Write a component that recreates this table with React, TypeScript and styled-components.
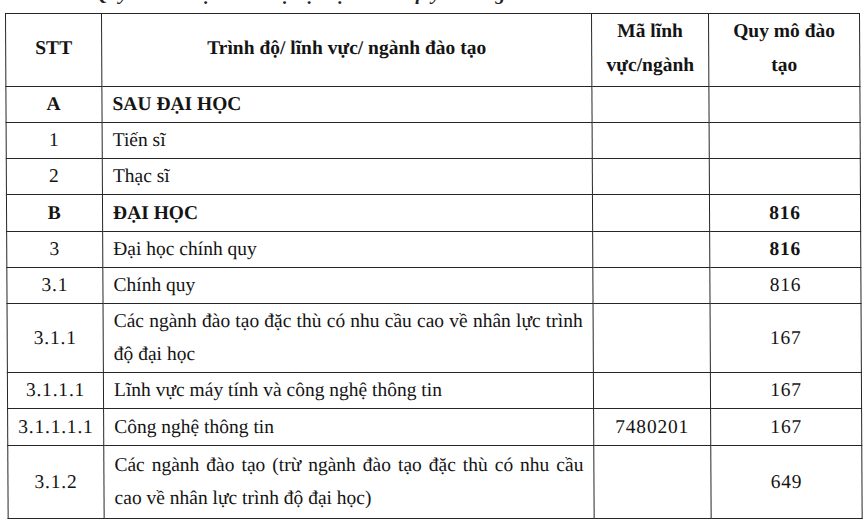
import React from 'react';
import styled, { createGlobalStyle } from 'styled-components';

const GlobalStyle = createGlobalStyle`
  html, body {
    margin: 0;
    padding: 0;
    background: #ffffff;
  }
  body {
    font-family: 'Liberation Serif', 'Times New Roman', serif;
    color: #141414;
  }
`;

const Page = styled.div`
  width: 866px;
  height: 532px;
  overflow: hidden;
  padding-left: 5px;
  box-sizing: border-box;
`;

const Caption = styled.div`
  margin-top: -16px;
  margin-left: 17px;
  height: 20px;
  line-height: 20px;
  font-size: 19.5px;
  font-weight: bold;
  font-style: italic;
  white-space: nowrap;
  color: #222;
`;

const Table = styled.table`
  margin-top: 9px;
  width: 854px;
  border-collapse: collapse;
  table-layout: fixed;
  font-size: 19.5px;
  transform: skewX(0.3deg);
  transform-origin: top left;
`;

const Col = styled.col<{ $w: number }>`
  width: ${(p) => p.$w}px;
`;

const Row = styled.tr<{ $h: number }>`
  height: ${(p) => p.$h}px;
`;

const Th = styled.th`
  border: 1.5px solid #262626;
  padding: 0 14px 4px;
  font-weight: bold;
  text-align: center;
  vertical-align: middle;
  line-height: 34px;
`;

const Td = styled.td<{ $align?: 'left' | 'center' | 'justify'; $bold?: boolean; $num?: boolean }>`
  border: 1.5px solid #262626;
  padding: 0 10px 2px;
  vertical-align: middle;
  text-align: ${(p) => p.$align || 'left'};
  font-weight: ${(p) => (p.$bold ? 'bold' : 'normal')};
  letter-spacing: ${(p) => (p.$num ? '0.8px' : 'normal')};
  line-height: 33px;
  white-space: ${(p) => (p.$num ? 'nowrap' : 'normal')};
`;

type Item = {
  stt: string;
  name: string;
  code?: string;
  size?: string;
  h: number;
  bold?: boolean;
  boldSize?: boolean;
};

const rows: Item[] = [
  { stt: 'A', name: 'SAU ĐẠI HỌC', h: 36, bold: true },
  { stt: '1', name: 'Tiến sĩ', h: 35 },
  { stt: '2', name: 'Thạc sĩ', h: 35 },
  { stt: 'B', name: 'ĐẠI HỌC', size: '816', h: 37, bold: true, boldSize: true },
  { stt: '3', name: 'Đại học chính quy', size: '816', h: 36, boldSize: true },
  { stt: '3.1', name: 'Chính quy', size: '816', h: 35 },
  {
    stt: '3.1.1',
    name: 'Các ngành đào tạo đặc thù có nhu cầu cao về nhân lực trình độ đại học',
    size: '167',
    h: 69,
  },
  { stt: '3.1.1.1', name: 'Lĩnh vực máy tính và công nghệ thông tin', size: '167', h: 36 },
  { stt: '3.1.1.1.1', name: 'Công nghệ thông tin', code: '7480201', size: '167', h: 37 },
  {
    stt: '3.1.2',
    name: 'Các ngành đào tạo (trừ ngành đào tạo đặc thù có nhu cầu cao về nhân lực trình độ đại học)',
    size: '649',
    h: 73,
  },
];

export default function App() {
  return (
    <Page>
      <GlobalStyle />
      <Caption>c.&nbsp;&nbsp;1.3.3. Quy mô đào tạo trình độ đại học chính quy theo ngành năm 2023</Caption>
      <Table>
        <colgroup>
          <Col $w={96} />
          <Col $w={490} />
          <Col $w={117} />
          <Col $w={151} />
        </colgroup>
        <thead>
          <Row $h={73}>
            <Th>STT</Th>
            <Th>Trình độ/ lĩnh vực/ ngành đào tạo</Th>
            <Th>Mã lĩnh vực/ngành</Th>
            <Th>Quy mô đào tạo</Th>
          </Row>
        </thead>
        <tbody>
          {rows.map((r) => (
            <Row key={r.stt} $h={r.h}>
              <Td $align="center" $bold={r.bold} $num>
                {r.stt}
              </Td>
              <Td $align="justify" $bold={r.bold}>
                {r.name}
              </Td>
              <Td $align="center" $num>
                {r.code}
              </Td>
              <Td $align="center" $bold={r.boldSize} $num>
                {r.size}
              </Td>
            </Row>
          ))}
        </tbody>
      </Table>
    </Page>
  );
}
